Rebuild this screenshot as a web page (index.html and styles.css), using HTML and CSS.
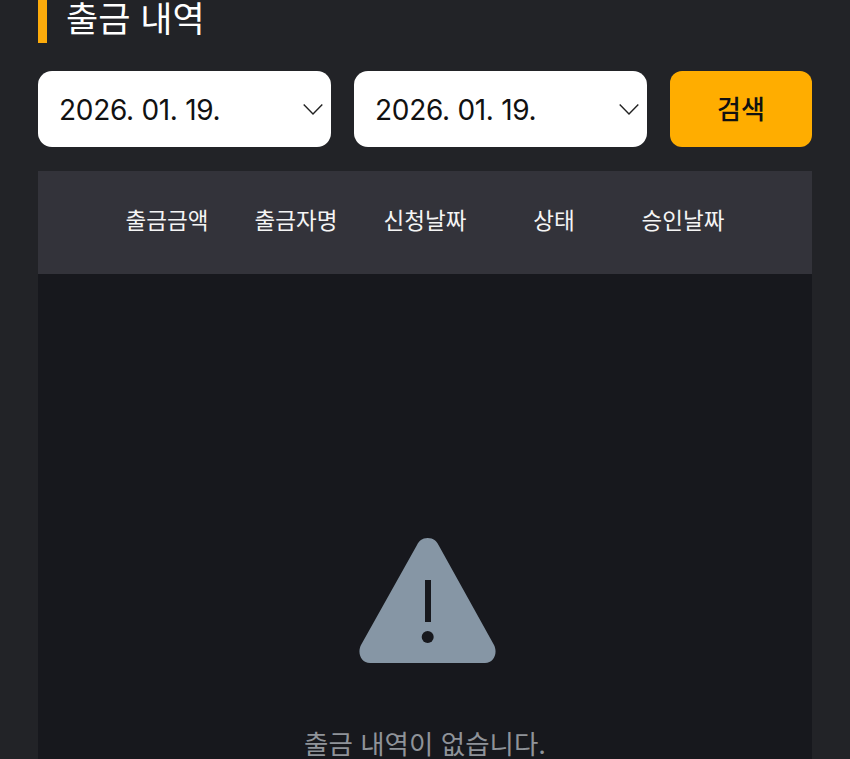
FILE: index.html
```html
<!DOCTYPE html>
<html lang="ko">
<head>
<meta charset="utf-8">
<title>출금 내역</title>
<link rel="stylesheet" href="styles.css">
</head>
<body>
<main class="page">
  <h1 class="title">출금 내역</h1>
  <form class="filters">
    <div class="date">
      <span class="date-text">2026. 01. 19.</span>
      <svg class="chev" width="20" height="13" viewBox="0 0 20 13"><path d="M.7 1.5 L10 11 L19.3 1.5" fill="none" stroke="#222" stroke-width="1.4"/></svg>
    </div>
    <div class="date">
      <span class="date-text">2026. 01. 19.</span>
      <svg class="chev" width="20" height="13" viewBox="0 0 20 13"><path d="M.7 1.5 L10 11 L19.3 1.5" fill="none" stroke="#222" stroke-width="1.4"/></svg>
    </div>
    <div class="search">검색</div>
  </form>
  <section class="table">
    <div class="thead">
      <span class="th">출금금액</span>
      <span class="th">출금자명</span>
      <span class="th">신청날짜</span>
      <span class="th">상태</span>
      <span class="th">승인날짜</span>
    </div>
    <div class="tbody">
      <svg class="warn" width="138" height="127" viewBox="0 0 138 127">
        <path d="M68.7 1 C63 1 60 4 58 8 L2 108 C-2 116 2 126 11 126 L126 126 C135 126 139 116 135 108 L79.500 8 C77.500 4 74.500 1 68.700 1 Z" fill="#8696a5"/>
        <rect x="66" y="43" width="6" height="42" fill="#17181d"/>
        <circle cx="68.700" cy="100" r="6" fill="#17181d"/>
      </svg>
      <p class="empty">출금 내역이 없습니다.</p>
    </div>
  </section>
</main>
</body>
</html>
```

FILE: styles.css
```css
* { box-sizing: border-box; }
html, body { margin: 0; height: 100%; overflow: hidden; }
body {
  background: #222327;
  font-family: Inter, "Noto Sans CJK KR", sans-serif;
}
.page { padding: 0 38px; }
.title {
  margin: 0;
  height: 43px;
  border-left: 9px solid #fdab0b;
  padding-left: 19px;
  color: #fff;
  font-size: 35px;
  font-weight: 400;
  line-height: 38px;
}
.filters {
  display: flex;
  gap: 23px;
  margin-top: 28px;
  height: 76px;
}
.date {
  flex: 0 0 293px;
  background: #fff;
  border-radius: 14px;
  display: flex;
  align-items: center;
  justify-content: space-between;
  padding: 0 8px 0 21px;
}
.date-text {
  color: #111;
  margin-top: 2px;
  font-size: 28px;
  font-weight: 400;
  letter-spacing: -0.3px;
}
.search {
  flex: 1;
  background: #ffad00;
  border-radius: 12px;
  display: flex;
  align-items: center;
  justify-content: center;
  padding-bottom: 4px;
  color: #111;
  font-size: 26px;
  font-weight: 500;
}
.table { margin-top: 24px; }
.thead {
  height: 103px;
  background: #33333a;
  display: flex;
  justify-content: center;
  align-items: center;
  padding-bottom: 8px;
}
.th {
  flex: 0 0 129px;
  text-align: center;
  color: #f5f5f5;
  font-size: 22.500px;
  font-weight: 400;
}
.tbody {
  height: 486px;
  background: #17181d;
  display: flex;
  flex-direction: column;
  align-items: center;
  padding-top: 263px;
}
.warn { display: block; flex: none; margin-left: 6px; }
.empty {
  flex: none;
  margin: 62px 0 0;
  color: #8f9399;
  font-size: 26.500px;
  line-height: 36px;
  white-space: nowrap;
}
```
